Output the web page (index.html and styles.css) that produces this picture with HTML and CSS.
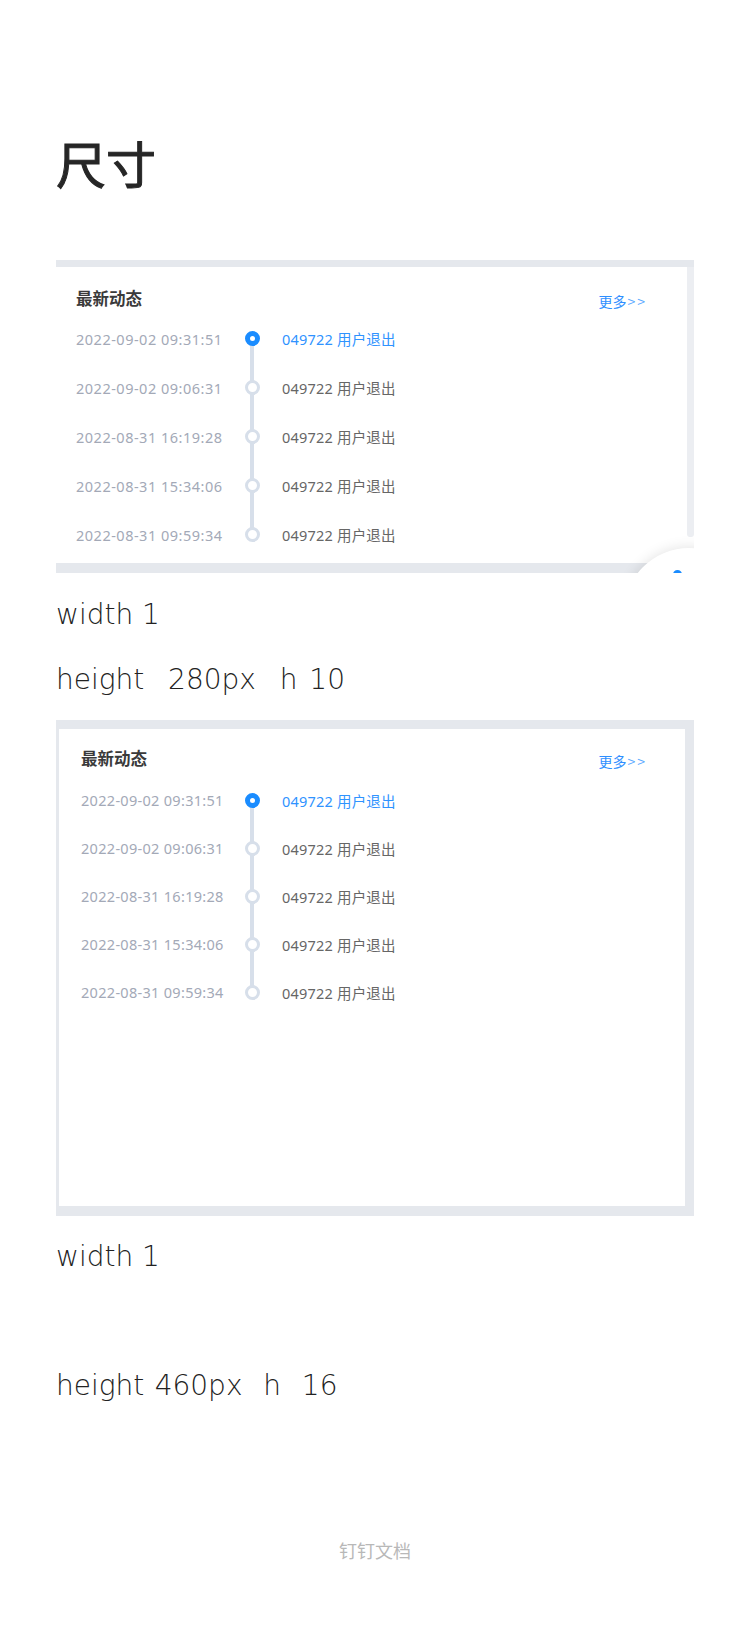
FILE: index.html
```html
<!DOCTYPE html>
<html lang="zh-CN">
<head>
<meta charset="utf-8">
<title>尺寸</title>
<link rel="stylesheet" href="styles.css">
</head>
<body>
<main class="page">
  <h1 class="title">尺寸</h1>

  <section class="shot shot-one">
    <div class="shot-one-body">
      <div class="panel panel-one">
        <div class="panel-head">
          <span class="panel-title">最新动态</span>
          <span class="panel-more">更多<span class="more-arrows">&gt;&gt;</span></span>
        </div>
        <ul class="timeline timeline-one">
          <li class="tl-row active"><span class="tl-date">2022-09-02 09:31:51</span><span class="tl-axis"><span class="tl-dot"></span></span><span class="tl-text">049722 用户退出</span></li>
          <li class="tl-row"><span class="tl-date">2022-09-02 09:06:31</span><span class="tl-axis"><span class="tl-dot"></span></span><span class="tl-text">049722 用户退出</span></li>
          <li class="tl-row"><span class="tl-date">2022-08-31 16:19:28</span><span class="tl-axis"><span class="tl-dot"></span></span><span class="tl-text">049722 用户退出</span></li>
          <li class="tl-row"><span class="tl-date">2022-08-31 15:34:06</span><span class="tl-axis"><span class="tl-dot"></span></span><span class="tl-text">049722 用户退出</span></li>
          <li class="tl-row"><span class="tl-date">2022-08-31 09:59:34</span><span class="tl-axis"><span class="tl-dot"></span></span><span class="tl-text">049722 用户退出</span></li>
        </ul>
      </div>
      <div class="scrollbar"><div class="scroll-thumb"></div></div>
    </div>
    <div class="float-btn"></div>
    <div class="float-dot"></div>
  </section>

  <p class="note note-first">width 1</p>
  <p class="note note-second">height  280px  h 10</p>

  <section class="shot shot-two">
    <div class="panel panel-two">
      <div class="panel-head">
        <span class="panel-title">最新动态</span>
        <span class="panel-more">更多<span class="more-arrows">&gt;&gt;</span></span>
      </div>
      <ul class="timeline timeline-two">
        <li class="tl-row active"><span class="tl-date">2022-09-02 09:31:51</span><span class="tl-axis"><span class="tl-dot"></span></span><span class="tl-text">049722 用户退出</span></li>
        <li class="tl-row"><span class="tl-date">2022-09-02 09:06:31</span><span class="tl-axis"><span class="tl-dot"></span></span><span class="tl-text">049722 用户退出</span></li>
        <li class="tl-row"><span class="tl-date">2022-08-31 16:19:28</span><span class="tl-axis"><span class="tl-dot"></span></span><span class="tl-text">049722 用户退出</span></li>
        <li class="tl-row"><span class="tl-date">2022-08-31 15:34:06</span><span class="tl-axis"><span class="tl-dot"></span></span><span class="tl-text">049722 用户退出</span></li>
        <li class="tl-row"><span class="tl-date">2022-08-31 09:59:34</span><span class="tl-axis"><span class="tl-dot"></span></span><span class="tl-text">049722 用户退出</span></li>
      </ul>
    </div>
  </section>

  <p class="note note-third">width 1</p>
  <p class="note note-fourth">height 460px  h  16</p>

  <footer class="footer">钉钉文档</footer>
</main>
</body>
</html>
```

FILE: styles.css
```css
* { box-sizing: border-box; }

html, body {
  margin: 0;
  padding: 0;
  background: #ffffff;
}

body {
  font-family: "Noto Sans", "Noto Sans CJK SC", sans-serif;
  color: #333333;
}

.page {
  width: 750px;
  padding: 0 56px;
  display: flex;
  flex-direction: column;
}

.title {
  margin: 132px 0 0;
  height: 60px;
  line-height: 60px;
  font-family: "Noto Sans CJK SC", sans-serif;
  font-size: 50px;
  font-weight: 400;
  -webkit-text-stroke: 1px #262626;
  color: #262626;
}

/* ---------- screenshot frames ---------- */
.shot {
  position: relative;
  overflow: hidden;
  background: #e5e8ed;
}

.shot-one {
  margin-top: 68px;
  height: 313px;
  padding: 7px 0 10px 0;
  display: flex;
  flex-direction: column;
}

.shot-one-body {
  flex: 1;
  display: flex;
  background: #ffffff;
}

.panel {
  background: #ffffff;
  font-family: "Noto Sans", "Noto Sans CJK SC", sans-serif;
}

.panel-one {
  flex: 1;
  padding-left: 20px;
}

.scrollbar {
  width: 7px;
  background: #ffffff;
}

.scroll-thumb {
  height: 270px;
  background: #eceef2;
  border-radius: 0 0 3px 3px;
}

.shot-two {
  margin-top: 20px;
  height: 496px;
  padding: 9px 9px 10px 3px;
  display: flex;
}

.panel-two {
  flex: 1;
  padding-left: 22px;
}

.panel-head {
  display: flex;
  justify-content: space-between;
  align-items: flex-start;
  height: 47px;
  padding-right: 40px;
}

.panel-one .panel-head { padding-top: 22px; }
.panel-two .panel-head { padding-top: 20px; padding-right: 38px; }

.panel-title {
  font-family: "Noto Sans CJK SC", sans-serif;
  font-size: 16.5px;
  line-height: 18px;
  font-weight: 700;
  color: #3a3a3a;
}

.panel-more {
  margin-top: 3px;
  font-family: "Noto Sans CJK SC", sans-serif;
  font-size: 14px;
  line-height: 18px;
  color: #2f8fff;
}

.more-arrows {
  margin-left: 1px;
  letter-spacing: 2px;
  color: #5aa8ff;
}

/* ---------- timeline ---------- */
.timeline {
  list-style: none;
  margin: 0;
  padding: 0;
}

.tl-row {
  display: flex;
  align-items: center;
  height: 49px;
  font-size: 14.5px;
}

.timeline-two .tl-row { height: 48px; }

.tl-date {
  width: 168px;
  color: #a3a9b7;
  letter-spacing: 0.5px;
  white-space: nowrap;
}

.timeline-two .tl-date { width: 163px; letter-spacing: 0.3px; }

.tl-axis {
  position: relative;
  width: 16px;
  height: 100%;
  display: flex;
  align-items: center;
  justify-content: center;
}

.tl-axis::before {
  content: "";
  position: absolute;
  left: 6px;
  width: 4px;
  top: 0;
  bottom: 0;
  background: #d7dfea;
}

.tl-row:first-child .tl-axis::before { top: 50%; }
.tl-row:last-child .tl-axis::before { bottom: 50%; }

.tl-dot {
  position: relative;
  width: 15px;
  height: 15px;
  border-radius: 50%;
  background: #ffffff;
  border: 3.5px solid #d7dfea;
}

.tl-row.active .tl-dot {
  border: 5px solid #1a8cff;
}

.tl-text {
  margin-left: 22px;
  color: #666666;
  font-family: "Noto Sans", "Noto Sans CJK SC", sans-serif;
  letter-spacing: 0.2px;
  white-space: nowrap;
}

.tl-row.active .tl-text { color: #2f93ff; }

/* ---------- overlay (floating button peeking into first shot) ---------- */
.float-btn {
  position: absolute;
  left: 568px;
  top: 288px;
  width: 130px;
  height: 130px;
  border-radius: 50%;
  background: #ffffff;
  box-shadow: 0 0 14px rgba(0, 0, 0, 0.12);
}

.float-dot {
  position: absolute;
  left: 617px;
  top: 310px;
  width: 9px;
  height: 9px;
  border-radius: 50%;
  background: #1a8cff;
}

/* ---------- notes ---------- */
.note {
  margin: 0;
  height: 40px;
  line-height: 40px;
  font-family: "DejaVu Sans", sans-serif;
  font-size: 28px;
  font-weight: 300;
  color: #222222;
  white-space: pre;
}

.note-first { margin-top: 22px; }
.note-second { margin-top: 25px; word-spacing: 3px; }
.note-third { margin-top: 21px; }
.note-fourth { margin-top: 89px; word-spacing: 1.5px; }

.footer {
  margin-top: 132px;
  height: 24px;
  line-height: 24px;
  text-align: center;
  font-family: "Noto Sans CJK SC", sans-serif;
  font-size: 18px;
  color: #b8b8b8;
}
```
